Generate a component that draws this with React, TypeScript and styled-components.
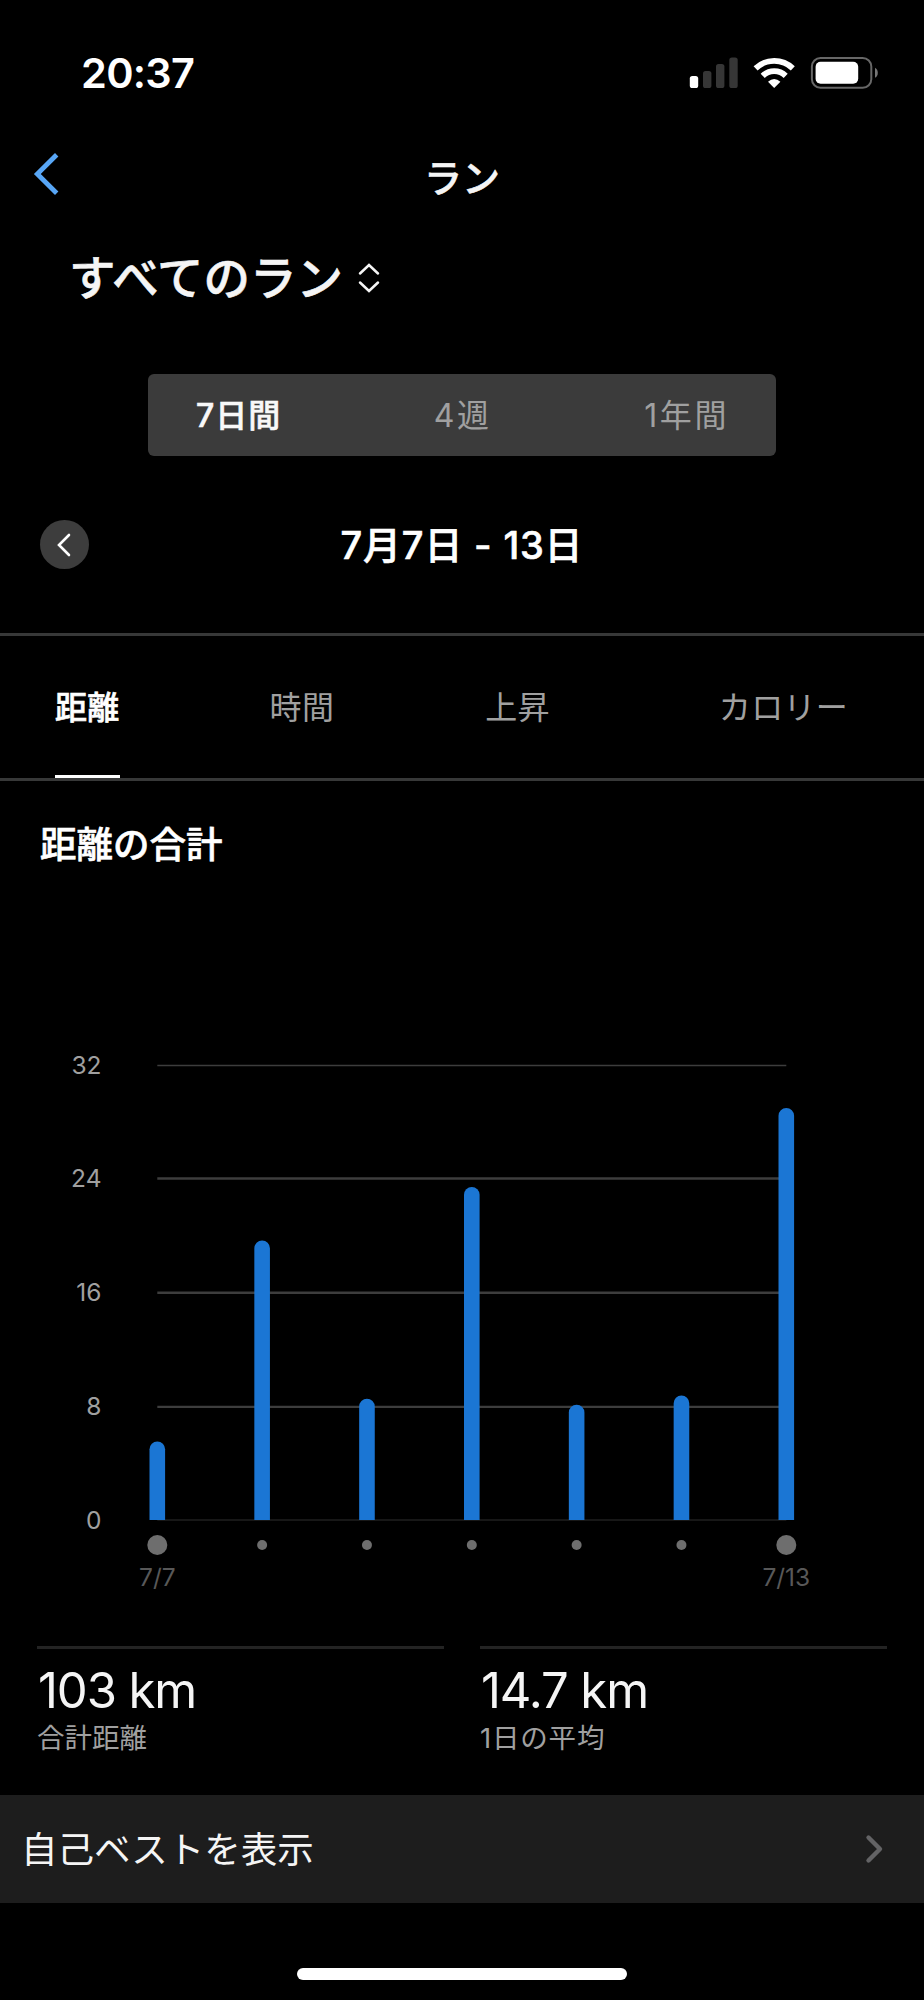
import React from "react";
import styled, { createGlobalStyle, css } from "styled-components";

const GlobalStyle = createGlobalStyle`
  * { box-sizing: border-box; }
  body {
    margin: 0;
    background: #000;
    color: #f5f5f5;
    font-family: Inter, "Noto Sans CJK JP", sans-serif;
  }
  button {
    border: 0;
    padding: 0;
    background: none;
    color: inherit;
    font: inherit;
  }
  svg { display: block; flex: none; }
`;

const semibold = css`
  font-weight: 500;
  -webkit-text-stroke: 0.6px currentColor;
`;

const Screen = styled.div`
  display: flex;
  flex-direction: column;
  width: 924px;
  height: 2000px;
  overflow: hidden;
  white-space: nowrap;
`;

const StatusBar = styled.header`
  display: flex;
  justify-content: space-between;
  align-items: center;
  height: 146px;
  padding: 0 46px 0 81px;
`;

const Clock = styled.time`
  font-size: 41.5px;
  font-weight: 600;
  letter-spacing: -0.7px;
  color: #fff;
`;

const NavBar = styled.nav`
  display: grid;
  grid-template-columns: 100px 1fr 100px;
  height: 64px;
`;

const BackButton = styled.button`
  padding: 5px 0 0 32px;
  display: flex;
`;

const NavTitle = styled.h1`
  margin: 0;
  text-align: center;
  font-size: 38px;
  ${semibold}
  line-height: 65px;
`;

const SportPicker = styled.button`
  display: flex;
  align-items: center;
  gap: 14px;
  height: 136px;
  margin-bottom: 28px;
  padding-left: 69px;
  font-size: 46.5px;
  ${semibold}
  line-height: 136px;
`;

const Segments = styled.div`
  display: flex;
  justify-content: space-between;
  width: 628px;
  height: 82px;
  margin: 0 auto;
  padding: 0 47px 0 48px;
  border-radius: 6px;
  background: #3b3b3b;
`;

const Segment = styled.button<{ $active?: boolean }>`
  font-size: 32px;
  line-height: 81px;
  letter-spacing: ${(p) => (p.$active ? 1 : 2.6)}px;
  color: ${(p) => (p.$active ? "#f8f8f8" : "#a0a0a0")};
  ${(p) => p.$active && semibold}
`;

const DateRow = styled.div`
  display: grid;
  grid-template-columns: 49px 1fr 49px;
  align-items: center;
  height: 177px;
  padding: 0 40px;
`;

const PrevButton = styled.button`
  display: flex;
  align-items: center;
  justify-content: center;
  width: 49px;
  height: 49px;
  padding-right: 2px;
  border-radius: 50%;
  background: #3d3d3d;
`;

const DateRange = styled.div`
  padding-bottom: 4px;
  text-align: center;
  font-size: 38px;
  ${semibold}
  letter-spacing: 0.8px;
  color: #fff;
`;

const Tabs = styled.div`
  display: flex;
  height: 148px;
  padding-left: 55px;
  border-top: 3px solid #373838;
  border-bottom: 3px solid #373838;
`;

const Tab = styled.button<{ $active?: boolean; $gap?: number }>`
  height: 142px;
  margin-right: ${(p) => p.$gap ?? 0}px;
  padding-bottom: 2px;
  border-bottom: 3px solid ${(p) => (p.$active ? "#fff" : "transparent")};
  font-size: 32px;
  letter-spacing: 0.3px;
  color: ${(p) => (p.$active ? "#fff" : "#a0a0a0")};
  ${(p) => p.$active && semibold}
`;

const SectionTitle = styled.h2`
  height: 125px;
  margin: 0;
  padding: 2px 0 0 40px;
  font-size: 36.5px;
  ${semibold}
  line-height: 125px;
  color: #fff;
`;

const Chart = styled.svg`
  width: 924px;
  height: 740px;
  font-size: 24.5px;
`;

const Stats = styled.section`
  display: flex;
  gap: 36px;
  height: 149px;
  padding: 0 37px;
`;

const Stat = styled.div`
  flex: 1;
  border-top: 3px solid #232323;
`;

const StatValue = styled.div`
  height: 67px;
  padding: 11px 0 0 1px;
  font-size: 49px;
  line-height: 62px;
  letter-spacing: -1.1px;
`;

const StatLabel = styled.div<{ $tracking?: number }>`
  font-size: 27.5px;
  line-height: 44px;
  letter-spacing: ${(p) => p.$tracking ?? 0}px;
  color: #a0a0a0;
`;

const BestRow = styled.button`
  display: flex;
  align-items: center;
  justify-content: space-between;
  height: 108px;
  padding: 0 40px 0 21px;
  background: #1d1d1d;
  font-size: 36.5px;
`;

const BestLabel = styled.span`
  padding-bottom: 4px;
`;

const HomeIndicator = styled.div`
  width: 330px;
  height: 12px;
  margin: 65px auto 0;
  border-radius: 6px;
  background: #fff;
`;

const AXIS = { left: 157.3, right: 786.3, base: 614 };

const ticks = [
  { value: 32, y: 159.5, thickness: 1.3, color: "#3d3d3d" },
  { value: 24, y: 272.5, thickness: 2.4, color: "#3d3d3d" },
  { value: 16, y: 386.7, thickness: 2.4, color: "#3d3d3d" },
  { value: 8, y: 500.8, thickness: 2.2, color: "#3d3d3d" },
  { value: 0, y: 614, thickness: 1.6, color: "#1f1f1f" },
];

const days = [
  { top: 535.5, label: "7/7" },
  { top: 334.5 },
  { top: 492.8 },
  { top: 281 },
  { top: 498.7 },
  { top: 489.5 },
  { top: 202, label: "7/13" },
];

function DistanceChart() {
  const step = (AXIS.right - AXIS.left) / (days.length - 1);
  return (
    <Chart viewBox="0 0 924 740">
      {ticks.map((t) => (
        <g key={t.value}>
          <text x="101.5" y={t.y + 8.5} textAnchor="end" fill="#a0a0a0">
            {t.value}
          </text>
          <line x1={AXIS.left} x2={AXIS.right} y1={t.y} y2={t.y} stroke={t.color} strokeWidth={t.thickness} />
        </g>
      ))}
      {days.map((d, i) => {
        const x = AXIS.left + step * i;
        return (
          <g key={i}>
            <path
              d={`M${x - 7.8} ${AXIS.base}V${d.top + 7.8}a7.8 7.8 0 0 1 15.6 0V${AXIS.base}z`}
              fill="#1b76d4"
            />
            <circle cx={x} cy="639" r={d.label ? 10 : 5} fill="#6e6e6e" />
            {d.label && (
              <text x={x} y="680" textAnchor="middle" fill="#585858">
                {d.label}
              </text>
            )}
          </g>
        );
      })}
    </Chart>
  );
}

function StatusIcons() {
  return (
    <svg width="190" height="34" viewBox="688 56 190 34">
      <rect x="689.8" y="76" width="8.4" height="12" rx="2.6" fill="#fff" />
      <rect x="703" y="71" width="8.4" height="17" rx="2.6" fill="#363636" />
      <rect x="716" y="64" width="8.4" height="24" rx="2.6" fill="#363636" />
      <rect x="729.3" y="57.5" width="8.4" height="30.5" rx="2.6" fill="#363636" />
      <g fill="none" stroke="#fff" strokeWidth="5.8">
        <path d="M755.6 68.4a27 27 0 0 1 37.2 0" />
        <path d="M762.7 75.8a16.6 16.6 0 0 1 23 0" />
      </g>
      <path d="M774.2 88l-6.2-6.3q6.2-5.2 12.4 0z" fill="#fff" />
      <rect x="811.9" y="57.9" width="59.4" height="29.9" rx="8.6" fill="none" stroke="#676767" strokeWidth="2" />
      <rect x="815.6" y="61.8" width="42.6" height="22" rx="5" fill="#fff" />
      <path d="M875 67.8q2.8 1.5 2.8 5t-2.8 5z" fill="#777" />
    </svg>
  );
}

export default function App() {
  return (
    <Screen lang="ja">
      <GlobalStyle />
      <StatusBar>
        <Clock>20:37</Clock>
        <StatusIcons />
      </StatusBar>
      <NavBar>
        <BackButton aria-label="戻る">
          <svg width="28" height="46" viewBox="0 0 28 46" fill="none" stroke="#58a6f6" strokeWidth="4.8">
            <path d="M24.7 3.7L5.3 23l19.4 19.3" />
          </svg>
        </BackButton>
        <NavTitle>ラン</NavTitle>
      </NavBar>
      <SportPicker>
        すべてのラン
        <svg width="24" height="32" viewBox="0 0 24 32" fill="none" stroke="#f5f5f5" strokeWidth="2.5" strokeLinecap="round">
          <path d="M3 11.5L12 3l9 8.5M3 20.5l9 8.5 9-8.5" />
        </svg>
      </SportPicker>
      <Segments>
        <Segment $active>7日間</Segment>
        <Segment>4週</Segment>
        <Segment>1年間</Segment>
      </Segments>
      <DateRow>
        <PrevButton aria-label="前の週">
          <svg width="16" height="26" viewBox="0 0 16 26" fill="none" stroke="#fff" strokeWidth="2.6" strokeLinecap="round">
            <path d="M13 3L3 13l10 10" />
          </svg>
        </PrevButton>
        <DateRange>7月7日 - 13日</DateRange>
      </DateRow>
      <Tabs>
        <Tab $active $gap={150}>距離</Tab>
        <Tab $gap={151}>時間</Tab>
        <Tab $gap={169}>上昇</Tab>
        <Tab>カロリー</Tab>
      </Tabs>
      <SectionTitle>距離の合計</SectionTitle>
      <DistanceChart />
      <Stats>
        <Stat>
          <StatValue>103 km</StatValue>
          <StatLabel>合計距離</StatLabel>
        </Stat>
        <Stat>
          <StatValue>14.7 km</StatValue>
          <StatLabel $tracking={0.8}>1日の平均</StatLabel>
        </Stat>
      </Stats>
      <BestRow>
        <BestLabel>自己ベストを表示</BestLabel>
        <svg width="20" height="30" viewBox="0 0 20 30" fill="none" stroke="#636365" strokeWidth="4.4" strokeLinecap="round" strokeLinejoin="round">
          <path d="M4.5 3.5L16 15 4.5 26.5" />
        </svg>
      </BestRow>
      <HomeIndicator />
    </Screen>
  );
}
